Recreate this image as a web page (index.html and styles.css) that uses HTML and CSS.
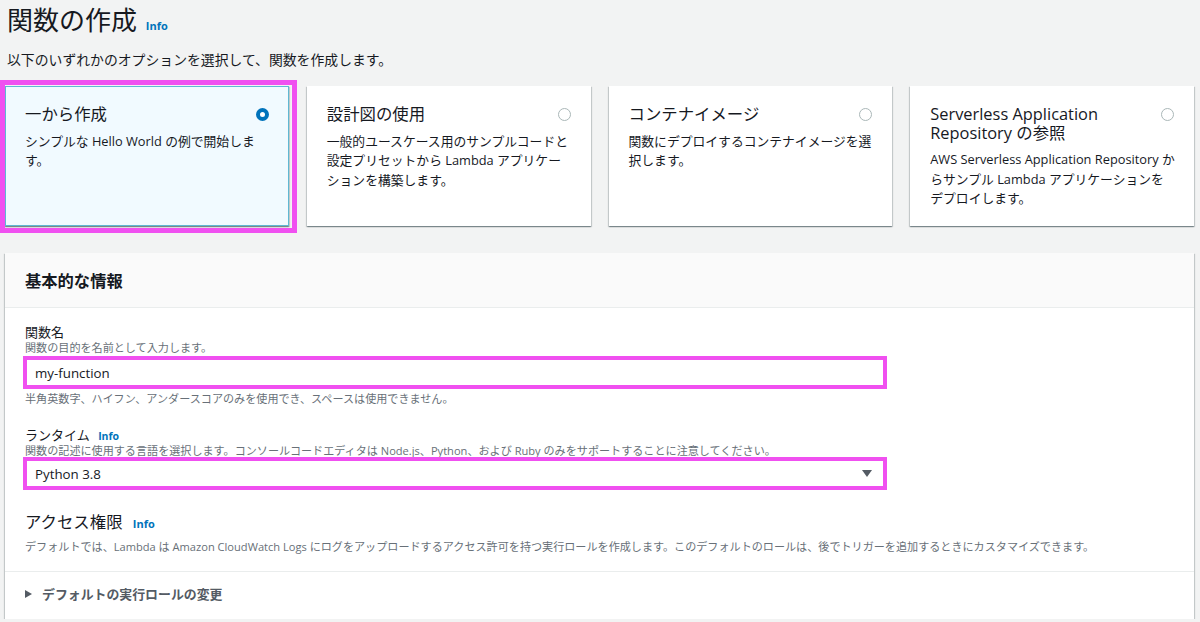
FILE: index.html
```html
<!DOCTYPE html>
<html lang="ja">
<head>
<meta charset="utf-8">
<title>関数の作成</title>
<link rel="stylesheet" href="styles.css">
</head>
<body>
<div class="page">
  <header class="page-head">
    <h1 class="page-title">関数の作成 <a class="info" href="#">Info</a></h1>
    <p class="page-sub">以下のいずれかのオプションを選択して、関数を作成します。</p>
  </header>

  <div class="cards">
    <div class="card card-selected">
      <div class="card-top">
        <div class="card-title">一から作成</div>
        <span class="radio radio-on"></span>
      </div>
      <div class="card-desc">シンプルな Hello World の例で開始しま<br>す。</div>
    </div>
    <div class="card">
      <div class="card-top">
        <div class="card-title">設計図の使用</div>
        <span class="radio"></span>
      </div>
      <div class="card-desc">一般的ユースケース用のサンプルコードと<br>設定プリセットから Lambda アプリケー<br>ションを構築します。</div>
    </div>
    <div class="card">
      <div class="card-top">
        <div class="card-title">コンテナイメージ</div>
        <span class="radio"></span>
      </div>
      <div class="card-desc">関数にデプロイするコンテナイメージを選<br>択します。</div>
    </div>
    <div class="card">
      <div class="card-top">
        <div class="card-title">Serverless Application Repository の参照</div>
        <span class="radio"></span>
      </div>
      <div class="card-desc">AWS Serverless Application Repository か<br>らサンプル Lambda アプリケーションを<br>デプロイします。</div>
    </div>
  </div>

  <section class="panel">
    <div class="panel-head">基本的な情報</div>
    <div class="panel-body">
      <div class="field">
        <div class="label">関数名</div>
        <div class="hint">関数の目的を名前として入力します。</div>
        <div class="input hl">my-function</div>
        <div class="hint constraint">半角英数字、ハイフン、アンダースコアのみを使用でき、スペースは使用できません。</div>
      </div>
      <div class="field field-runtime">
        <div class="label">ランタイム <a class="info" href="#">Info</a></div>
        <div class="hint">関数の記述に使用する言語を選択します。コンソールコードエディタは Node.js、Python、および Ruby のみをサポートすることに注意してください。</div>
        <div class="input select hl"><span>Python 3.8</span><span class="caret"></span></div>
      </div>
      <div class="access">
        <div class="access-title">アクセス権限 <a class="info" href="#">Info</a></div>
        <div class="hint access-desc">デフォルトでは、Lambda は Amazon CloudWatch Logs にログをアップロードするアクセス許可を持つ実行ロールを作成します。このデフォルトのロールは、後でトリガーを追加するときにカスタマイズできます。</div>
      </div>
    </div>
    <div class="expander"><span class="tri"></span>デフォルトの実行ロールの変更</div>
  </section>
</div>
</body>
</html>
```

FILE: styles.css
```css
* { box-sizing: border-box; }

html, body {
  margin: 0;
  padding: 0;
  background: #f2f3f3;
}

body {
  font-family: "Open Sans", "Noto Sans CJK JP", sans-serif;
  color: #16191f;
}

.page {
  padding: 4px 6px 0 5px;
}

.page-title {
  margin: 0;
  font-size: 26px;
  line-height: 32px;
  height: 32px;
  font-weight: 400;
  padding-left: 2px;
}

.info {
  color: #0073bb;
  font-weight: 700;
  font-size: 11px;
  text-decoration: none;
  margin-left: 4px;
}

.page-title .info {
  margin-left: 2px;
}

.page-sub {
  margin: 14px 0 0 2px;
  font-size: 13.85px;
  line-height: 20px;
  height: 20px;
}

.cards {
  display: grid;
  grid-template-columns: repeat(4, 1fr);
  gap: 18px;
  margin-top: 16px;
}

.card {
  position: relative;
  background: #fff;
  min-height: 140px;
  padding: 18px 17px 16px 19px;
  border: 1px solid transparent;
  box-shadow: 0 1px 1px 0 rgba(0, 28, 36, 0.3), 1px 1px 1px 0 rgba(0, 28, 36, 0.15), -1px 1px 1px 0 rgba(0, 28, 36, 0.15);
}

.card-selected {
  background: #f1faff;
  border: 1px solid #5fb8d3;
}

.card-selected::after {
  content: "";
  position: absolute;
  left: -6px;
  top: -7px;
  right: -9px;
  bottom: -8px;
  border: 5px solid #f050f0;
  pointer-events: none;
}

.card-top {
  display: flex;
  justify-content: space-between;
  align-items: flex-start;
  gap: 12px;
}

.card-title {
  font-size: 16.4px;
  line-height: 18.5px;
}

.radio {
  flex: none;
  width: 13px;
  height: 13px;
  border-radius: 50%;
  border: 1px solid #aab7b8;
  background: #fff;
  margin-top: 3px;
  margin-right: 2px;
}

.radio-on {
  border: 4px solid #0073bb;
  background: #fff;
}

.card-desc {
  margin-top: 8px;
  font-size: 12.8px;
  line-height: 19.6px;
  color: #16191f;
}

.panel {
  margin-top: 27px;
  background: #fff;
  box-shadow: 0 1px 1px 0 rgba(0, 28, 36, 0.3), 1px 1px 1px 0 rgba(0, 28, 36, 0.15), -1px 1px 1px 0 rgba(0, 28, 36, 0.15);
}

.panel-head {
  background: #fafafa;
  border-bottom: 1px solid #eaeded;
  padding: 17px 20px 15px;
  font-size: 16.3px;
  line-height: 22px;
  font-weight: 700;
  height: 55px;
}

.panel-body {
  padding: 15px 20px 17px 20px;
  border-bottom: 1px solid #eaeded;
}

.label {
  font-size: 13px;
  line-height: 18px;
  height: 18px;
  color: #16191f;
}

.hint {
  font-size: 11.1px;
  line-height: 14px;
  color: #687078;
}

.input {
  margin-top: 3px;
  width: 860px;
  height: 29px;
  border: 1px solid #aab7b8;
  background: #fff;
  padding: 0 9px;
  display: flex;
  align-items: center;
  font-size: 13.3px;
  color: #16191f;
}

.hl {
  outline: 4px solid #f050f0;
  outline-offset: -2px;
}

.constraint {
  margin-top: 5px;
}

.field-runtime {
  margin-top: 20px;
}

.field-runtime .input {
  margin-top: 1px;
}

.field-runtime .info {
  font-size: 10.5px;
  margin-left: 5px;
}

.select {
  justify-content: space-between;
  padding-right: 12px;
}

.caret {
  width: 0;
  height: 0;
  border-left: 5px solid transparent;
  border-right: 5px solid transparent;
  border-top: 7px solid #545b64;
}

.access {
  margin-top: 23px;
}

.access-title {
  font-size: 16.4px;
  line-height: 22px;
  height: 22px;
}

.access-title .info {
  margin-left: 6px;
}

.access-desc {
  margin-top: 7px;
}

.expander {
  display: flex;
  align-items: center;
  padding: 13px 20px 16px 20px;
  font-size: 12.9px;
  line-height: 18px;
  font-weight: 700;
  color: #545b64;
}

.tri {
  width: 0;
  height: 0;
  border-top: 4.5px solid transparent;
  border-bottom: 4.5px solid transparent;
  border-left: 7px solid #545b64;
  margin-right: 10px;
}
```
